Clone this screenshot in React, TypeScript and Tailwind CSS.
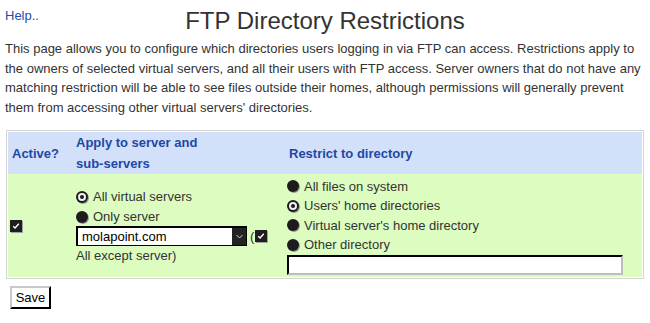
import React from "react";

const font = { fontFamily: '"Liberation Sans", Arial, sans-serif' };

function Radio({ checked }: { checked?: boolean }) {
  return (
    <span className="relative inline-flex h-[12px] w-[12px] shrink-0 items-center justify-center rounded-full bg-[#1c1c1c] shadow-[1px_1px_0_#9a9a9a]">
      {checked && (
        <span className="flex h-[8px] w-[8px] items-center justify-center rounded-full bg-[#f0f0f0]">
          <span className="h-[4px] w-[4px] rounded-full bg-[#1c1c1c]" />
        </span>
      )}
    </span>
  );
}

function Check() {
  return (
    <span className="inline-flex h-[12px] w-[12px] shrink-0 items-center justify-center bg-[#1e1e1e] shadow-[1px_1px_0_#a0a0a0]">
      <svg width="8" height="8" viewBox="0 0 8 8" fill="none">
        <path d="M1.2 4.2 L3.1 6 L6.8 1.8" stroke="#ffffff" strokeWidth="1.4" />
      </svg>
    </span>
  );
}

function RadioRow({ label, checked }: { label: string; checked?: boolean }) {
  return (
    <div className="flex h-[19.5px] items-center gap-[5px]">
      <Radio checked={checked} />
      <span>{label}</span>
    </div>
  );
}

export default function App() {
  return (
    <div className="min-h-screen bg-white px-[5px] pt-[7px] text-[#333333]" style={font}>
      <div className="grid grid-cols-[1fr_auto_1fr] items-start">
        <a className="text-[13px] leading-[18px] text-[#1f4da8]" href="#">
          Help..
        </a>
        <h1 className="text-[24px] leading-[28px] font-normal">FTP Directory Restrictions</h1>
        <div />
      </div>

      <p className="mt-[4px] text-[13px] leading-[19.5px]">
        This page allows you to configure which directories users logging in via FTP can access. Restrictions apply to
        the owners of selected virtual servers, and all their users with FTP access. Server owners that do not have any
        matching restriction will be able to see files outside their homes, although permissions will generally prevent
        them from accessing other virtual servers' directories.
      </p>

      <div className="mt-[13px] ml-px w-[638px] border border-[#d4d4d4] p-px">
        <div className="grid grid-cols-[64px_213px_357px] bg-[#d2e1f9] text-[13px] font-bold leading-[21px] text-[#1f47a6]">
          <div className="flex items-center px-[4px]">Active?</div>
          <div className="px-[4px]">
            Apply to server and
            <br />
            sub-servers
          </div>
          <div className="flex items-center px-[4px]">Restrict to directory</div>
        </div>

        <div className="grid h-[103px] grid-cols-[64px_213px_357px] bg-[#ddfcc0] text-[13px] leading-[19.5px]">
          <div className="flex items-center px-[2px]">
            <Check />
          </div>
          <div className="flex flex-col justify-center px-[4px] pt-[2px]">
            <RadioRow label="All virtual servers" checked />
            <RadioRow label="Only server" />
            <div className="flex items-center">
              <div className="flex h-[20px] w-[171px] items-stretch border-t-2 border-l-2 border-r border-b border-black bg-white">
                <span className="flex-1 pl-[4px] leading-[17px] text-black">molapoint.com</span>
                <span className="flex w-[14px] items-center justify-center bg-[#222222]">
                  <svg width="7" height="5" viewBox="0 0 7 5" fill="none">
                    <path d="M0.5 1 L3.5 4 L6.5 1" stroke="#cfcfcf" strokeWidth="1" />
                  </svg>
                </span>
              </div>
              <span className="ml-[3px] mr-[1px]">(</span>
              <Check />
            </div>
            <div>All except server)</div>
          </div>
          <div className="flex flex-col justify-center px-[2px]">
            <RadioRow label="All files on system" />
            <RadioRow label="Users' home directories" checked />
            <RadioRow label="Virtual server's home directory" />
            <RadioRow label="Other directory" />
            <div className="h-[20px] w-[336px] border-t-2 border-l-2 border-r-2 border-b-2 border-t-black border-l-black border-r-[#bdbdbd] border-b-[#bdbdbd] bg-white" />
          </div>
        </div>
      </div>

      <button className="mt-[7px] ml-[5px] h-[23px] w-[41px] border-2 border-t-[#c8c8c8] border-l-[#c8c8c8] border-r-black border-b-black bg-white text-[13px] text-black">
        Save
      </button>
    </div>
  );
}
